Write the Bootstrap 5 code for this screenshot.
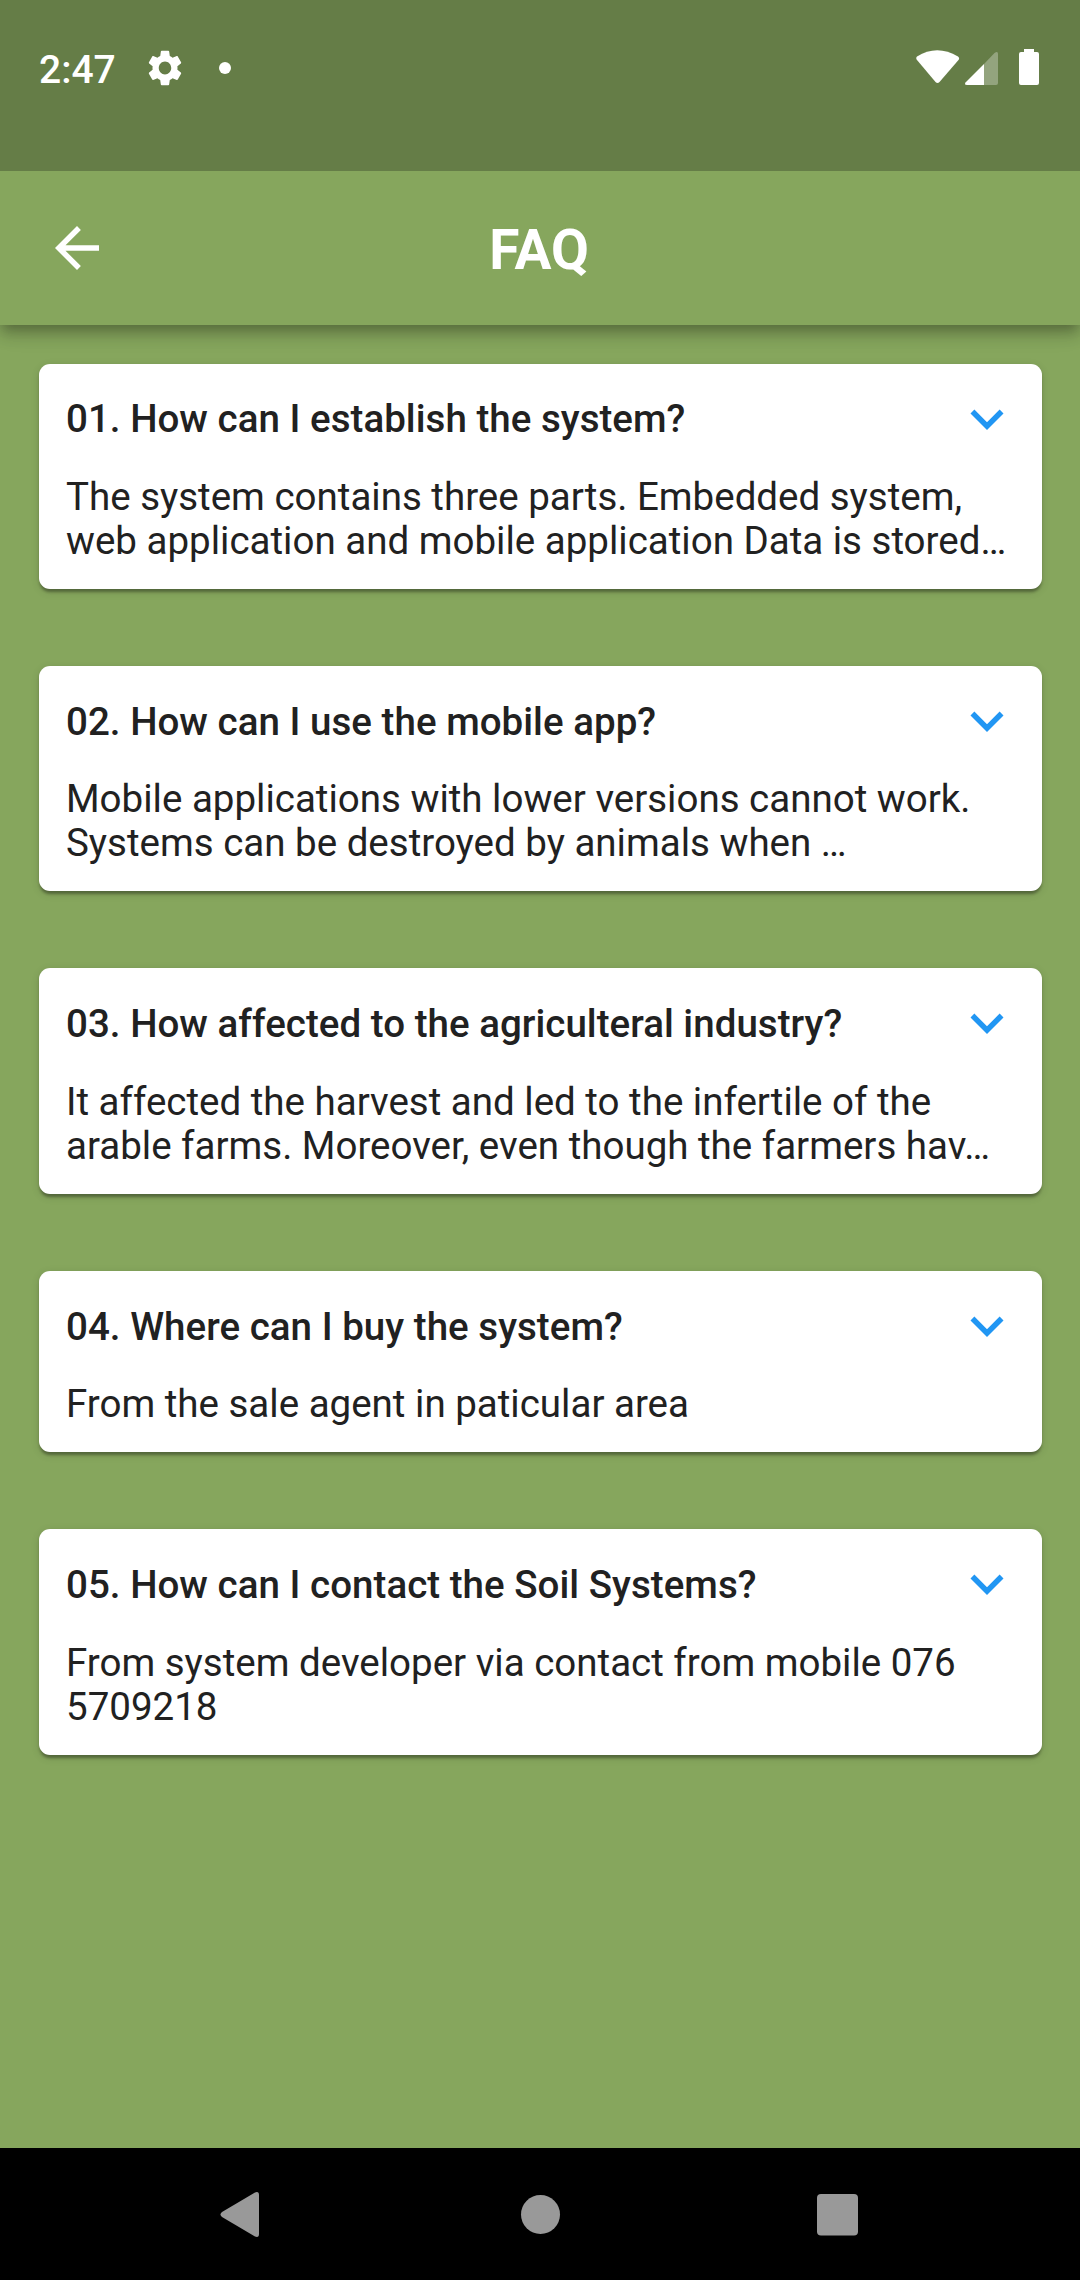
<!DOCTYPE html>
<html lang="en">
<head>
<meta charset="utf-8">
<meta name="viewport" content="width=device-width, initial-scale=1">
<title>FAQ</title>
<link href="https://cdn.jsdelivr.net/npm/bootstrap@5.3.0/dist/css/bootstrap.min.css" rel="stylesheet">
<style>
body{font-family:Roboto,"Noto Sans",sans-serif;background:#86a65d;color:#212121;height:2280px;overflow:hidden}
.status-bar{height:171px;background:#657d47;padding:0 41px 0 39px;z-index:2}
.status-row{height:135px}
.clock{font-size:39px;font-weight:500;line-height:1;letter-spacing:0;width:108.5px;padding-top:5px}
.notice-dot{width:12px;height:12px;margin-left:37px;background:#fff}
.app-bar{height:154px;background:#86a65d;box-shadow:0 5.5px 11px -2.75px rgba(0,0,0,.2),0 11px 13.75px 0 rgba(0,0,0,.14),0 2.75px 27.5px 0 rgba(0,0,0,.12);padding:0 44px;z-index:1}
.app-title{font-size:55px;font-weight:700;line-height:64px;padding:3px 2px 0 0}
.side-slot{width:66px}
.faq-list{padding:38.5px 38.5px 0;gap:77px}
.faq-card{border:0;border-radius:11px;color:#212121;padding:22px 22px 26.2px 27.5px;box-shadow:0 5.5px 2.75px -2.75px rgba(0,0,0,.2),0 2.75px 2.75px 0 rgba(0,0,0,.14),0 2.75px 8.25px 0 rgba(0,0,0,.12)}
.faq-head{height:66px}
.faq-q{font-size:38.5px;font-weight:500;line-height:44px;letter-spacing:.03px;padding-top:1.3px}
.faq-a{font-size:38.5px;line-height:44px;margin-top:23.3px;white-space:nowrap}
.nav-keys{height:132px}
</style>
</head>
<body class="d-flex flex-column">
<header class="status-bar position-relative flex-shrink-0 text-white">
  <div class="status-row d-flex align-items-center">
    <span class="clock">2:47</span>
    <svg width="34" height="36" viewBox="2.2 2 19.6 20" preserveAspectRatio="none" fill="#fff"><path d="M19.14 12.94c.04-.3.06-.61.06-.94 0-.32-.02-.64-.07-.94l2.03-1.58c.18-.14.23-.41.12-.61l-1.92-3.32c-.12-.22-.37-.29-.59-.22l-2.39.96c-.5-.38-1.03-.7-1.62-.94l-.36-2.54c-.04-.24-.24-.41-.48-.41h-3.84c-.24 0-.43.17-.47.41l-.36 2.54c-.59.24-1.13.57-1.62.94l-2.39-.96c-.22-.08-.47 0-.59.22L2.74 8.87c-.12.21-.08.47.12.61l2.03 1.58c-.05.3-.09.63-.09.94s.02.64.07.94l-2.03 1.58c-.18.14-.23.41-.12.61l1.92 3.32c.12.22.37.29.59.22l2.39-.96c.5.38 1.03.7 1.62.94l.36 2.54c.05.24.24.41.48.41h3.84c.24 0 .44-.17.47-.41l.36-2.54c.59-.24 1.13-.56 1.62-.94l2.39.96c.22.08.47 0 .59-.22l1.92-3.32c.12-.22.07-.47-.12-.61l-2.01-1.58zM12 15.600c-1.980 0-3.600-1.620-3.600-3.600s1.620-3.600 3.600-3.600 3.600 1.620 3.600 3.600-1.620 3.600-3.600 3.600z"/></svg>
    <span class="notice-dot rounded-circle"></span>
    <svg class="ms-auto" width="124" height="37" viewBox="915 49 124 37"><path fill="#fff" d="M917 56.5Q937 44 958 56.500Q960 58 958.500 60L939.500 82Q937.500 84 935.500 82L917 60Q915.500 58 917 56.500Z"/><path fill="#fff" fill-opacity=".3" d="M984 64L994.500 53Q998 50.500 998 54V83Q998 85 996 85H984Z"/><path fill="#fff" d="M984 64V85H967Q964 85 965.500 82.500Z"/><path fill="#fff" d="M1024 49h10v3h3q2 0 2 2v29q0 2-2 2h-16q-2 0-2-2V54q0-2 2-2h3z"/></svg>
  </div>
</header>
<nav class="app-bar flex-shrink-0 d-flex align-items-center justify-content-between position-relative text-white">
  <svg class="side-slot" height="66" viewBox="0 0 24 24" fill="#fff"><path d="M20 11H7.830l5.590-5.590L12 4l-8 8 8 8 1.410-1.410L7.830 13H20v-2z"/></svg>
  <h1 class="app-title m-0">FAQ</h1>
  <span class="side-slot"></span>
</nav>
<main class="faq-list flex-grow-1 d-flex flex-column">
  <section class="card faq-card">
    <div class="faq-head d-flex align-items-center justify-content-between"><h2 class="faq-q m-0">01. How can I establish the system?</h2><svg width="66" height="66" viewBox="0 0 24 24" fill="#2196f3"><path d="M16.590 8.590L12 13.170 7.410 8.590 6 10l6 6 6-6z"/></svg></div>
    <p class="faq-a mb-0">The system contains three parts. Embedded system,<br>web application and mobile application Data is stored…</p>
  </section>
  <section class="card faq-card">
    <div class="faq-head d-flex align-items-center justify-content-between"><h2 class="faq-q m-0">02. How can I use the mobile app?</h2><svg width="66" height="66" viewBox="0 0 24 24" fill="#2196f3"><path d="M16.590 8.590L12 13.170 7.410 8.590 6 10l6 6 6-6z"/></svg></div>
    <p class="faq-a mb-0">Mobile applications with lower versions cannot work.<br>Systems can be destroyed by animals when …</p>
  </section>
  <section class="card faq-card">
    <div class="faq-head d-flex align-items-center justify-content-between"><h2 class="faq-q m-0">03. How affected to the agriculteral industry?</h2><svg width="66" height="66" viewBox="0 0 24 24" fill="#2196f3"><path d="M16.590 8.590L12 13.170 7.410 8.590 6 10l6 6 6-6z"/></svg></div>
    <p class="faq-a mb-0">It affected the harvest and led to the infertile of the<br>arable farms. Moreover, even though the farmers hav…</p>
  </section>
  <section class="card faq-card">
    <div class="faq-head d-flex align-items-center justify-content-between"><h2 class="faq-q m-0">04. Where can I buy the system?</h2><svg width="66" height="66" viewBox="0 0 24 24" fill="#2196f3"><path d="M16.590 8.590L12 13.170 7.410 8.590 6 10l6 6 6-6z"/></svg></div>
    <p class="faq-a mb-0">From the sale agent in paticular area</p>
  </section>
  <section class="card faq-card">
    <div class="faq-head d-flex align-items-center justify-content-between"><h2 class="faq-q m-0">05. How can I contact the Soil Systems?</h2><svg width="66" height="66" viewBox="0 0 24 24" fill="#2196f3"><path d="M16.590 8.590L12 13.170 7.410 8.590 6 10l6 6 6-6z"/></svg></div>
    <p class="faq-a mb-0">From system developer via contact from mobile 076<br>5709218</p>
  </section>
</main>
<footer class="nav-keys bg-black flex-shrink-0 d-flex align-items-center justify-content-center">
  <svg width="640" height="48" viewBox="220 2190 640 48" fill="#999"><path d="M222 2212L255 2192.500Q259 2191 259 2195V2234Q259 2238 255 2236.500L222 2217Q219 2214.500 222 2212Z"/><circle cx="540.500" cy="2214.500" r="19.500"/><rect x="817" y="2194" width="41" height="41.500" rx="4"/></svg>
</footer>
<script src="https://cdn.jsdelivr.net/npm/bootstrap@5.3.0/dist/js/bootstrap.bundle.min.js"></script>
</body>
</html>
